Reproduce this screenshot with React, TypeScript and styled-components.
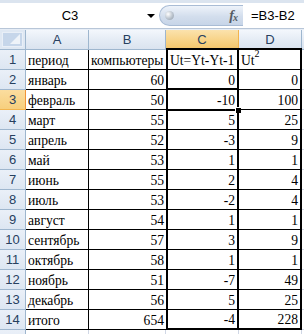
import styled, { createGlobalStyle, css } from "styled-components";

const GlobalStyle = createGlobalStyle`
  html, body {
    margin: 0;
    padding: 0;
    background: #ffffff;
    overflow: hidden;
  }
`;

type Col = "a" | "b" | "c" | "d" | "e";

interface RowData {
  period: string;
  value: string;
  diff: string;
  square: string;
}

const data: RowData[] = [
  { period: "январь", value: "60", diff: "0", square: "0" },
  { period: "февраль", value: "50", diff: "-10", square: "100" },
  { period: "март", value: "55", diff: "5", square: "25" },
  { period: "апрель", value: "52", diff: "-3", square: "9" },
  { period: "май", value: "53", diff: "1", square: "1" },
  { period: "июнь", value: "55", diff: "2", square: "4" },
  { period: "июль", value: "53", diff: "-2", square: "4" },
  { period: "август", value: "54", diff: "1", square: "1" },
  { period: "сентябрь", value: "57", diff: "3", square: "9" },
  { period: "октябрь", value: "58", diff: "1", square: "1" },
  { period: "ноябрь", value: "51", diff: "-7", square: "49" },
  { period: "декабрь", value: "56", diff: "5", square: "25" },
  { period: "итого", value: "654", diff: "-4", square: "228" },
];

const SELECTED_ROW = 3;

const Window = styled.div`
  width: 304px;
  height: 334px;
  overflow: hidden;
  display: flex;
  flex-direction: column;
  background: #ffffff;
`;

const TopStripe = styled.div`
  flex-shrink: 0;
  height: 3px;
  background: #dbe4ef;
`;

const FormulaBar = styled.div`
  flex-shrink: 0;
  height: 25px;
  display: flex;
  align-items: center;
  background: #ffffff;
  font-family: "Liberation Sans", Arial, sans-serif;
  font-size: 13px;
  color: #000000;
`;

const NameBox = styled.div`
  width: 159px;
  height: 100%;
  display: flex;
  align-items: center;
`;

const NameText = styled.span`
  width: 140px;
  text-align: center;
`;

const DropArrow = styled.span`
  width: 0;
  height: 0;
  margin-left: 7px;
  margin-top: 1px;
  border-left: 4px solid transparent;
  border-right: 4px solid transparent;
  border-top: 4px solid #000000;
`;

const FxPill = styled.div`
  width: 84px;
  height: 21px;
  box-sizing: border-box;
  border: 1px solid #a9bcd5;
  border-right: none;
  border-radius: 11px 0 0 11px;
  background: linear-gradient(#eef3fa, #d3deed 55%, #c7d5e8);
  display: flex;
  align-items: center;
  justify-content: space-between;
  padding: 0 6px 0 5px;
`;

const Grip = styled.span`
  width: 9px;
  height: 9px;
  border-radius: 50%;
  background: radial-gradient(circle at 35% 35%, #ffffff, #b9c2cc 55%, #8d98a5);
`;

const FxLabel = styled.span`
  font-family: "Liberation Serif", "Times New Roman", serif;
  font-style: italic;
  font-weight: bold;
  font-size: 14px;
  color: #555b63;
  letter-spacing: -1px;

  sub {
    font-size: 10px;
    vertical-align: -1px;
  }
`;

const FormulaText = styled.div`
  flex: 1;
  padding-left: 8px;
`;

const BarDivider = styled.div`
  flex-shrink: 0;
  height: 2px;
  background: linear-gradient(#b8c6d8 50%, #e6edf6 50%);
`;

const Sheet = styled.div`
  flex: 1;
  min-height: 0;
  overflow: hidden;
  display: grid;
  grid-template-columns: 26px 63px 77px 73px 63px 1fr;
  grid-auto-rows: 20px;
  font-family: "Liberation Serif", "Times New Roman", serif;
  font-size: 13.6px;
  color: #000000;
`;

const headerBase = css`
  box-sizing: border-box;
  display: flex;
  align-items: center;
  justify-content: center;
  font-family: "Liberation Sans", Arial, sans-serif;
  font-size: 13px;
  color: #27405f;
  border-right: 1px solid #9eb6ce;
  border-bottom: 1px solid #9eb6ce;
`;

const Corner = styled.div`
  ${headerBase};
  background: #dfe8f3;
  padding: 2px;
`;

const CornerInner = styled.div`
  width: 100%;
  height: 100%;
  box-sizing: border-box;
  background: #c6d6ea;
  border: 1px solid #e9eff7;
  display: flex;
  align-items: flex-end;
  justify-content: flex-end;
  padding: 2px;
`;

const ColHeader = styled.div<{ $selected?: boolean }>`
  ${headerBase};
  background: ${(p) =>
    p.$selected
      ? "linear-gradient(#fbe2ad, #f8d48a 50%, #f4c56a)"
      : "linear-gradient(#f3f7fc, #e5ecf5 50%, #dae3ef)"};
  ${(p) =>
    p.$selected &&
    css`
      border-right-color: #f2b44e;
      border-bottom-color: #f29436;
    `}
`;

const RowHeader = styled.div<{ $selected?: boolean }>`
  ${headerBase};
  background: ${(p) =>
    p.$selected
      ? "linear-gradient(#fbdd9f, #f7cf7d)"
      : "linear-gradient(#eaf0f8, #dde6f2)"};
  ${(p) =>
    p.$selected &&
    css`
      border-right-color: #f29436;
      border-bottom-color: #f2b44e;
    `}
`;

const Cell = styled.div<{
  $col: Col;
  $right?: boolean;
  $first?: boolean;
  $last?: boolean;
}>`
  box-sizing: border-box;
  position: relative;
  display: flex;
  align-items: flex-end;
  justify-content: ${(p) => (p.$right ? "flex-end" : "flex-start")};
  padding: 0 2px 0 2px;
  white-space: nowrap;
  overflow: ${(p) => (p.$col === "b" ? "hidden" : "visible")};
  line-height: 17px;
  border-bottom: 1px solid #000000;

  ${(p) =>
    p.$col === "a" &&
    css`
      border-right: 1px solid #000000;
    `}

  ${(p) =>
    p.$col === "c" &&
    css`
      border-left: 2px solid #000000;
      border-right: 2px solid #000000;
    `}

  ${(p) =>
    p.$col === "d" &&
    css`
      border-right: 2px solid #000000;
    `}

  ${(p) =>
    p.$col === "e" &&
    css`
      border-bottom-color: #d0d7e5;
    `}

  ${(p) =>
    p.$first &&
    (p.$col === "c" || p.$col === "d") &&
    css`
      margin-top: -2px;
      border-top: 2px solid #000000;
    `}

  ${(p) =>
    p.$last &&
    (p.$col === "c" || p.$col === "d") &&
    css`
      border-bottom-width: 2px;
    `}
`;

const EmptyCell = styled.div<{ $last?: boolean }>`
  box-sizing: border-box;
  border-right: ${(p) => (p.$last ? "none" : "1px solid #d0d7e5")};
`;

const Selection = styled.div`
  position: absolute;
  top: -2px;
  left: -2px;
  right: -2px;
  bottom: -2px;
  border: 2px solid #000000;
  box-shadow: inset 0 0 0 1px #ffffff;
  pointer-events: none;
`;

const FillHandle = styled.span`
  position: absolute;
  right: -5px;
  bottom: -5px;
  width: 5px;
  height: 5px;
  background: #000000;
  border: 1px solid #ffffff;
`;

const Sup = styled.sup`
  font-size: 10px;
  line-height: 0;
  position: relative;
  top: -2px;
`;

const App = () => {
  return (
    <>
      <GlobalStyle />
      <Window>
        <TopStripe />
        <FormulaBar>
          <NameBox>
            <NameText>C3</NameText>
            <DropArrow />
          </NameBox>
          <FxPill>
            <Grip />
            <FxLabel>
              f<sub>x</sub>
            </FxLabel>
          </FxPill>
          <FormulaText>=B3-B2</FormulaText>
        </FormulaBar>
        <BarDivider />
        <Sheet>
          <Corner>
            <CornerInner>
              <svg width="10" height="10" viewBox="0 0 10 10">
                <polygon points="10,0 10,10 0,10" fill="#eef3f9" />
              </svg>
            </CornerInner>
          </Corner>
          <ColHeader>A</ColHeader>
          <ColHeader>B</ColHeader>
          <ColHeader $selected>C</ColHeader>
          <ColHeader>D</ColHeader>
          <ColHeader />

          <RowHeader>1</RowHeader>
          <Cell $col="a">период</Cell>
          <Cell $col="b">компьютеры</Cell>
          <Cell $col="c" $first>
            Ut=Yt-Yt-1
          </Cell>
          <Cell $col="d" $first>
            <span>
              Ut<Sup>2</Sup>
            </span>
          </Cell>
          <Cell $col="e" />

          {data.map((row, i) => {
            const rowNum = i + 2;
            const last = i === data.length - 1;
            return [
              <RowHeader key={`h${rowNum}`} $selected={rowNum === SELECTED_ROW}>
                {rowNum}
              </RowHeader>,
              <Cell key={`a${rowNum}`} $col="a">
                {row.period}
              </Cell>,
              <Cell key={`b${rowNum}`} $col="b" $right>
                {row.value}
              </Cell>,
              <Cell key={`c${rowNum}`} $col="c" $right $last={last}>
                {row.diff}
                {rowNum === SELECTED_ROW && (
                  <Selection>
                    <FillHandle />
                  </Selection>
                )}
              </Cell>,
              <Cell key={`d${rowNum}`} $col="d" $right $last={last}>
                {row.square}
              </Cell>,
              <Cell key={`e${rowNum}`} $col="e" />,
            ];
          })}

          <RowHeader />
          <EmptyCell />
          <EmptyCell />
          <EmptyCell />
          <EmptyCell />
          <EmptyCell $last />
        </Sheet>
      </Window>
    </>
  );
};

export default App;
